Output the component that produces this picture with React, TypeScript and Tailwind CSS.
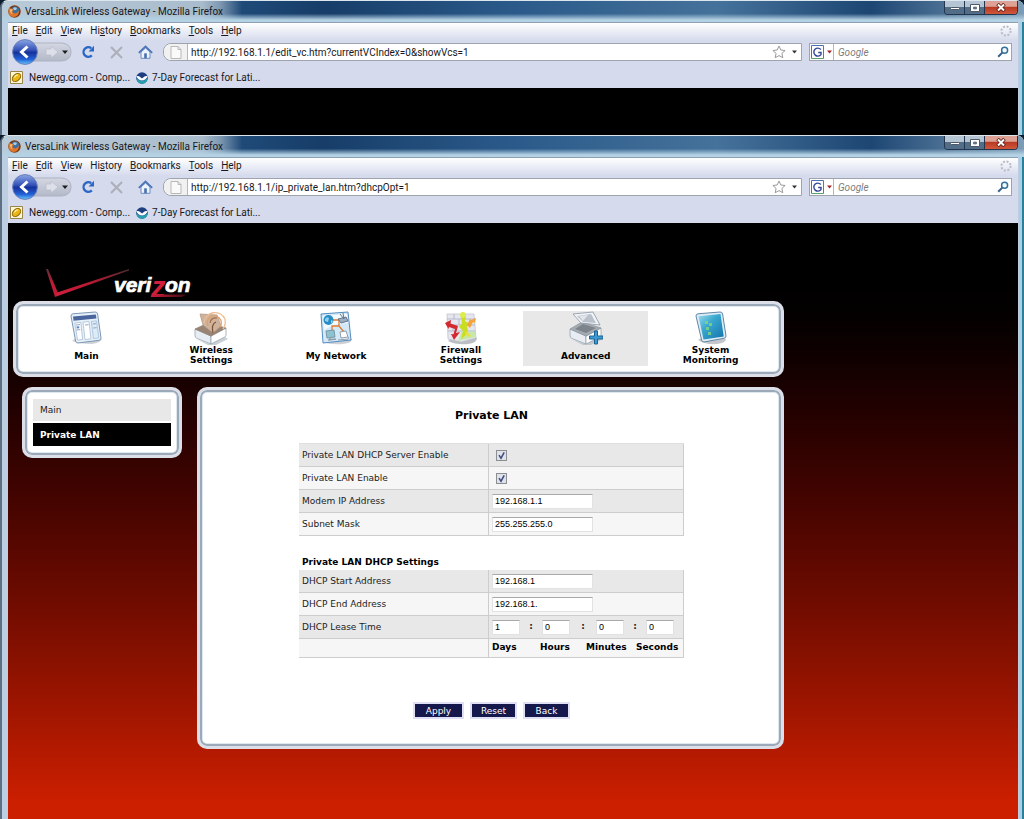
import { useId, type ReactNode } from "react";

/* ---------- browser chrome icons ---------- */

function FirefoxIcon() {
  return (
    <svg width="13" height="13" viewBox="0 0 13 13" aria-hidden="true">
      <circle cx="6.5" cy="6.5" r="6.2" fill="#7a3a14" />
      <circle cx="7.2" cy="5.6" r="4.2" fill="#41719f" />
      <path d="M5 3q2-1.6 4 0l-1 2H6z" fill="#a9cbe2" />
      <path d="M1 2.6q.8 1 2 .8 1.600.2 3.200 1.600L4.400 6q.2 2.600 3.200 2.500 2.600-.4 3-3.200.9 2.200-.6 4.400-2 2.600-5 2.200Q.6 11 .6 6.400q-.1-2 .4-3.800z" fill="#e0762a" />
      <path d="M2 4.400q1.400-.6 2.800.2L3.600 6.200q-.2 2 1.200 3Q1.900 8.300 2 4.400z" fill="#f6c07a" />
    </svg>
  );
}

function BackForward() {
  const id = useId();
  return (
    <svg width="60" height="26" viewBox="0 0 60 26" aria-hidden="true">
      <defs>
        <linearGradient id={id + "a"} x1="0" y1="0" x2="0" y2="1">
          <stop offset="0" stopColor="#8aa6e6" />
          <stop offset=".42" stopColor="#3552b8" />
          <stop offset=".52" stopColor="#16329b" />
          <stop offset=".8" stopColor="#2462d8" />
          <stop offset="1" stopColor="#63c8fa" />
        </linearGradient>
        <linearGradient id={id + "b"} x1="0" y1="0" x2="0" y2="1">
          <stop offset="0" stopColor="#d4d7e2" />
          <stop offset="1" stopColor="#b4b9c8" />
        </linearGradient>
      </defs>
      <path d="M10 4H50Q59 5 59 13Q59 21 50 22H10Z" fill={`url(#${id}b)`} stroke="#aeb3c3" />
      <path d="M34 10h5V7l7 6-7 6v-3h-5z" fill="#dde0e8" stroke="#b7bbc8" strokeWidth=".6" />
      <path d="M50 11.500h6l-3 3.500z" fill="#1b1c22" />
      <circle cx="13" cy="13" r="12.400" fill={`url(#${id}a)`} stroke="#6b7fb8" />
      <path d="M15.500 7.500L9.500 13l6 5.500M9.500 13h1" fill="none" stroke="#fff" strokeWidth="3" strokeLinejoin="miter" />
    </svg>
  );
}

function ReloadIcon() {
  return (
    <svg width="14" height="14" viewBox="0 0 14 14" aria-hidden="true">
      <path d="M10.800 10.400A4.800 4.800 0 1 1 10.200 3.200" fill="none" stroke="#2b67c4" strokeWidth="2.400" />
      <path d="M13 .8v5.600H7.600z" fill="#2b67c4" />
    </svg>
  );
}

function StopIcon() {
  return (
    <svg width="13" height="13" viewBox="0 0 13 13" aria-hidden="true">
      <path d="M1 1l11 11M12 1L1 12" stroke="#adb0bb" strokeWidth="2.200" />
    </svg>
  );
}

function HomeIcon() {
  return (
    <svg width="15" height="14" viewBox="0 0 15 14" aria-hidden="true">
      <path d="M3 7v6.300h9V7L7.500 3z" fill="#eef3fb" stroke="#6d8cc0" />
      <path d="M.8 7.800L7.500 1.500l6.700 6.300" fill="none" stroke="#4c76b8" strokeWidth="1.800" />
      <path d="M6.200 8.300h2.600v5H6.200z" fill="#4770b0" />
    </svg>
  );
}

function PageIcon() {
  return (
    <svg width="12" height="13" viewBox="0 0 12 13" aria-hidden="true">
      <path d="M1 .5h7l3 3v9H1z" fill="#fafafa" stroke="#b8b8b8" />
      <path d="M8 .5v3h3" fill="none" stroke="#b8b8b8" />
    </svg>
  );
}

function StarIcon() {
  return (
    <svg width="14" height="14" viewBox="0 0 14 14" aria-hidden="true">
      <path d="M7 1l1.800 4 4.300.5-3.200 2.900.9 4.300L7 10.600l-3.800 2.100.9-4.300L.9 5.500 5.200 5z" fill="#fff" stroke="#9a9a9a" />
    </svg>
  );
}

function CaretIcon({ color }: { color: string }) {
  return (
    <svg width="5" height="4" viewBox="0 0 5 4" aria-hidden="true">
      <path d="M0 .5h5L2.500 3.500z" fill={color} />
    </svg>
  );
}

function GoogleIcon() {
  return (
    <svg width="13" height="14" viewBox="0 0 13 14" aria-hidden="true">
      <path d="M.5 13.500V.5h12" fill="none" stroke="#4a6fb5" />
      <path d="M.5 13.500h12" stroke="#5ca06a" />
      <path d="M12.500.5v13" stroke="#b8555a" />
      <path d="M9.800 4.400A4 4 0 1 0 10 9.600V7.500H7.200" fill="none" stroke="#33459a" strokeWidth="1.400" />
    </svg>
  );
}

function SearchIcon() {
  return (
    <svg width="12" height="12" viewBox="0 0 12 12" aria-hidden="true">
      <circle cx="7.600" cy="4.200" r="3" fill="#f4fafd" stroke="#33719c" strokeWidth="1.500" />
      <path d="M5.300 6.600L1.200 10.700" stroke="#33618c" strokeWidth="2" />
    </svg>
  );
}

function ThrobberIcon() {
  return (
    <svg width="12" height="12" viewBox="0 0 12 12" aria-hidden="true">
      <circle cx="6" cy="6" r="4.600" fill="none" stroke="#b9bcc6" strokeWidth="2" strokeDasharray="2 1.610" />
    </svg>
  );
}

function EggIcon() {
  return (
    <svg width="13" height="13" viewBox="0 0 13 13" aria-hidden="true">
      <path d="M.5.5h12v12H.5z" fill="#fdf6d8" stroke="#9a8448" />
      <ellipse cx="6.500" cy="6.500" rx="4.800" ry="3.300" transform="rotate(-42 6.500 6.500)" fill="#eab614" stroke="#8a6306" />
      <path d="M4.400 6.400Q5.300 4 7.800 3.800" fill="none" stroke="#fff0a0" strokeWidth="1.300" />
    </svg>
  );
}

function NoaaIcon() {
  return (
    <svg width="12" height="12" viewBox="0 0 12 12" aria-hidden="true">
      <circle cx="6" cy="6" r="5.800" fill="#1d3f80" />
      <path d="M.2 5.500L1.200 9.200A5.800 5.800 0 0 0 10.800 9.200L11.800 5.500Q9 9 6 9T.2 5.500z" fill="#25a0ae" />
      <path d="M.5 4Q3 3.800 4.800 5.400L6 6.400l1.200-1Q9 3.800 11.500 4 11.500 5.500 9.500 7.200 7.600 8.600 6 8.600 4.400 8.600 2.500 7.200.5 5.500.5 4z" fill="#fff" />
    </svg>
  );
}

/* ---------- router page icons ---------- */

function MainIcon() {
  return (
    <svg width="34" height="34" viewBox="0 0 34 34" aria-hidden="true">
      <path d="M3 30l6-5 24 3q-2 4-10 5-12 0-20-3z" fill="#b9bec4" opacity=".7" />
      <path d="M2 5Q2 3 4 2.800L26 1q2.300-.1 2.600 2L32 27q.2 2-2 2.300L9 32q-2 .2-2.400-2z" fill="#e6f0f9" stroke="#7d97b5" />
      <path d="M4 5.500L26.800 3.600l.6 4L4.600 9.700z" fill="#4a669c" />
      <path d="M5.800 12l6-.6 1.800 17-5 .8zM14 11.200l6-.6 2 17.200-6 .7z" fill="#fff" stroke="#a8bdd6" strokeWidth=".8" />
      <path d="M22.300 10.400l5.200-.5 2.300 17-5.300.7z" fill="#dcecf8" stroke="#a8bdd6" strokeWidth=".8" />
      <path d="M7 14l4-.4M7.300 19l4-.4M16 14l3.500-.3M23.700 13l3.500-.3M24.200 17l3.500-.3" stroke="#8fa5c5" />
      <path d="M7.500 15.500l2.600-.2.300 2-2.600.2z" fill="#5f86bd" />
    </svg>
  );
}

function BoxBase() {
  return (
    <>
      <path d="M4 29l12 4 15-7 3 2-12 6-7 .5z" fill="#a9b1b9" opacity=".6" />
      <path d="M1 18L17 25v8L3 27.500Q1 26.500 1 24.500z" fill="#e8edf3" stroke="#8a98a8" strokeWidth=".7" />
      <path d="M17 25l15-8v7q0 1.200-1 1.900L17 33z" fill="#fff" stroke="#8a98a8" strokeWidth=".7" />
    </>
  );
}

function WirelessIcon() {
  return (
    <svg width="34" height="34" viewBox="0 0 34 34" aria-hidden="true">
      <BoxBase />
      <path d="M1 18L14 12l18 5-15 8z" fill="#9a8373" stroke="#8c7f75" strokeWidth=".7" />
      <path d="M6 3l17 1 4 11-8 7L9 14z" fill="#cfb39d" stroke="#b09a89" strokeWidth=".8" />
      <path d="M19 22Q17 13 22 11" stroke="#7d5436" fill="none" strokeWidth="1.200" />
      <path d="M14 15a7 7 0 1 1 12 1" fill="none" stroke="#de9f6a" strokeWidth="1.300" />
      <path d="M10 12A11 11 0 0 1 31 8q1 6-2 10" fill="none" stroke="#efbf94" strokeWidth="1.300" />
      <path d="M16 12q1-6 7-5" fill="none" stroke="#a56d45" strokeWidth="1.200" />
    </svg>
  );
}

function NetworkIcon() {
  return (
    <svg width="34" height="34" viewBox="0 0 34 34" aria-hidden="true">
      <path d="M4 31l6-4 23 1q0 4-9 5-12 1-20-2z" fill="#b9bec4" opacity=".7" />
      <path d="M2 3L29 1l3 28L4 32z" fill="#d4e9f8" stroke="#568bbf" />
      <path d="M4 5l24-2 1 9q-13 0-24 7z" fill="#f2faff" />
      <path d="M14 9h6v6h-7v6m7-6l5 6" fill="none" stroke="#e07c32" strokeWidth="1.300" />
      <circle cx="9.500" cy="9" r="5" fill="#278cc6" />
      <path d="M6 8q2-3 4-1l-1 4-3-1zm6 1l2 1-2 3z" fill="#8ed1ee" />
      <path d="M19 8l8-2 2 4-7 2zM21 3l4 5m-1-6l1 6" fill="#9badc0" stroke="#66768a" />
      <path d="M7 20l8-1 1 7-8 1z" fill="#8ec2cf" stroke="#7797a8" />
      <path d="M9 29l8-1M11 27v2" stroke="#8d9caa" strokeWidth="1.500" />
      <path d="M21 21l6-1 2 6-7 1zM19 29l10-1 1-2" fill="#fff" stroke="#909eac" />
    </svg>
  );
}

function FirewallIcon() {
  return (
    <svg width="34" height="34" viewBox="0 0 34 34" aria-hidden="true">
      <path d="M4 30l6-5 23 2q0 5-9 6-12 1-20-3z" fill="#a9aeb4" opacity=".8" />
      <path d="M3 3l27 0 2 24-15 4L4 28z" fill="#e5e6ee" stroke="#bbbdca" strokeWidth=".7" />
      <path d="M3 8h28M3 14h28M4 20h27M10 3v5M20 3v5M15 8v6M26 8v6M9 14v6" stroke="#b7bacc" />
      <path d="M14 30l4-10 13 1 1 5z" fill="#c6e8a9" />
      <path d="M1 12l6-3-.5 3.500L14 15l-2 7 4-1-6 8-3-6 2.500.3L11 18l-6-2-.5 2z" fill="#d3292f" />
      <path d="M19 1l3 4-1 5 5 3-3 2 1 5-3 5-4 3 2-8-4-4 3-4-1-6z" fill="#c9de22" />
      <circle cx="19" cy="4" r="3" fill="#dced4d" />
      <path d="M23 14l3-6 1 1 5-2-1 5-2-1-3 6z" fill="#f2a53a" />
      <path d="M22 20l5 5-2 1-4-3z" fill="#efdc3e" />
    </svg>
  );
}

function AdvancedIcon() {
  return (
    <svg width="34" height="34" viewBox="0 0 34 34" aria-hidden="true">
      <BoxBase />
      <path d="M1 18L13 11l19 6-15 8z" fill="#a4abb1" stroke="#8b939b" strokeWidth=".7" />
      <path d="M6 18l8-5 13 4-10 5z" fill="#7d848b" />
      <path d="M4 3L24 1l7 13-19-2z" fill="#f1f4f7" stroke="#8894a4" strokeWidth=".8" />
      <path d="M8 5l14-2 5 9-13-1z" fill="#b9c0ca" />
      <path d="M10 5l9-1-5 6z" fill="#e1e5ea" />
      <path d="M25.500 20h3v5H34v3h-5.500v5h-3v-5h-5v-3h5z" fill="#3c9bd2" stroke="#1c6395" />
    </svg>
  );
}

function MonitorIcon() {
  const id = useId();
  return (
    <svg width="34" height="34" viewBox="0 0 34 34" aria-hidden="true">
      <defs>
        <linearGradient id={id} x1="0" y1="0" x2="1" y2="1">
          <stop offset="0" stopColor="#9bdcee" />
          <stop offset=".4" stopColor="#3aa8cf" />
          <stop offset="1" stopColor="#1272ac" />
        </linearGradient>
      </defs>
      <path d="M4 29l6-4 22 3q0 4-9 5-12 1-19-4z" fill="#a9aeb4" opacity=".7" />
      <path d="M2 5Q2 3 4 2.800L26 1q2.300-.1 2.600 2L32 25q.2 2-2 2.300L10 31q-2 .2-2.400-2z" fill="#dcebf4" stroke="#5f87a8" />
      <path d="M4.500 5.200L26.500 3l3.200 22.500L9.500 28.500z" fill={`url(#${id})`} />
      <path d="M11 10h3v3h-3zM15 12h3v3h-3zM12 16h3v3h-3zM14 21h3v3h-3z" fill="#83d67c" opacity=".8" />
    </svg>
  );
}

function VerizonLogo() {
  const id = useId();
  return (
    <svg width="146" height="34" viewBox="0 0 146 34" role="img" aria-label="verizon">
      <defs>
        <linearGradient id={id + "l"} x1="0" y1="0" x2="0" y2="1">
          <stop offset="0" stopColor="#5b3036" />
          <stop offset=".5" stopColor="#c01c38" />
        </linearGradient>
        <linearGradient id={id + "r"} x1="0" y1="0" x2="1" y2="0">
          <stop offset="0" stopColor="#d01f3c" />
          <stop offset=".55" stopColor="#b01a32" />
          <stop offset="1" stopColor="#4a2c30" />
        </linearGradient>
        <linearGradient id={id + "z"} x1="0" y1="0" x2="1" y2="0">
          <stop offset="0" stopColor="#d01f3c" />
          <stop offset="1" stopColor="#3a0a12" />
        </linearGradient>
      </defs>
      <path d="M0 0L2 0L12 24L9 28z" fill={`url(#${id}l)`} />
      <path d="M9 28L11 23.500L83 0V1.500z" fill={`url(#${id}r)`} />
      <g fontFamily='"Liberation Sans", sans-serif' fontWeight="700" fontStyle="italic" strokeWidth=".7">
        <text x="68" y="23" fontSize="21" fill="#fff" stroke="#fff">veri</text>
        <text x="105" y="28" fontSize="29" fill="#d01f3c">z</text>
        <text x="119" y="23" fontSize="21" fill="#fff" stroke="#fff">on</text>
      </g>
      <path d="M106 25.500h34l-4 2.500h-31z" fill={`url(#${id}z)`} />
    </svg>
  );
}

/* ---------- browser window ---------- */

const menus = ["File", "Edit", "View", "History", "Bookmarks", "Tools", "Help"];
const accessIndex = [0, 0, 0, 2, 0, 0, 0];

function WindowButtons() {
  return (
    <div className="mr-1.5 flex h-3.5 overflow-hidden rounded-b border border-t-0 border-[#23364d]">
      <button aria-label="Minimize" className="flex w-5 items-end justify-center border-r border-[#23364d] bg-linear-to-b from-[#b5c5d3] from-45% to-[#526d88] to-50% pb-1">
        <span className="h-[3px] w-2.5 rounded-sm border border-[#4d5966] bg-white" />
      </button>
      <button aria-label="Maximize" className="flex w-5 items-center justify-center border-r border-[#23364d] bg-linear-to-b from-[#b5c5d3] from-45% to-[#526d88] to-50%">
        <svg width="10" height="8" viewBox="0 0 10 8" aria-hidden="true">
          <path d="M.5.500h9v7h-9z" fill="#fff" stroke="#4d5966" />
          <path d="M3.500 3h3v2h-3z" fill="#6c8298" stroke="#4d5966" strokeWidth=".6" />
        </svg>
      </button>
      <button aria-label="Close" className="flex w-8 items-center justify-center bg-linear-to-b from-[#dda195] from-40% via-[#b93a23] via-50% to-[#d0573c]">
        <svg width="10" height="9" viewBox="0 0 10 9" aria-hidden="true">
          <path d="M1.500 1l7 7M8.500 1l-7 7" stroke="#5d2018" strokeWidth="3.600" />
          <path d="M2 1.500l6 6M8 1.500l-6 6" stroke="#fff" strokeWidth="2" />
        </svg>
      </button>
    </div>
  );
}

function BrowserWindow({ url, grow, children }: { url: string; grow?: boolean; children: ReactNode }) {
  return (
    <section
      className={
        "flex flex-col rounded-t-lg border-t border-l-2 border-t-[#dbe6ee] border-l-[#5e6f82] bg-[#bccfe2] pr-1.5 pl-1.5 font-['Roboto','Noto_Sans',sans-serif] text-[10px] text-[#16181d] shadow-[inset_-2px_0_0_#2d7f99,inset_-5px_0_0_#a9d0e5] " +
        (grow ? "grow" : "")
      }
    >
      <header className="-mx-1.5 flex h-[21px] items-start justify-between rounded-t-md bg-[linear-gradient(to_bottom,transparent_60%,#b4d2e4_90%),linear-gradient(to_right,#b9cad8_0,#a9bccd_200px,#7f99b2_218px,#1f4a78_240px,#173d68_320px,#2b5a8a_50%,#45729a_70%,#1d4673_85%,#7d9cb6_100%)] pl-1.5">
        <h1 className="flex h-5 items-center gap-1">
          <FirefoxIcon />
          VersaLink Wireless Gateway - Mozilla Firefox
        </h1>
        <WindowButtons />
      </header>
      <div className="border-t border-[#8c9fb3] bg-linear-to-b from-white to-[#d5daec] to-[18px]">
        <div className="flex h-4 items-center justify-between pr-1.5 pl-1">
          <nav className="flex gap-2 pb-px">
            {menus.map((m, i) => (
              <button key={m} className="leading-[15px]">
                {m.slice(0, accessIndex[i])}
                <span className="underline">{m[accessIndex[i]]}</span>
                {m.slice(accessIndex[i] + 1)}
              </button>
            ))}
          </nav>
          <ThrobberIcon />
        </div>
        <div className="flex h-[26px] items-center pr-1.5 pl-1">
          <button aria-label="Back and forward"><BackForward /></button>
          <button aria-label="Reload" className="ml-[9px]"><ReloadIcon /></button>
          <button aria-label="Stop" className="ml-[15px]"><StopIcon /></button>
          <button aria-label="Home" className="ml-[15px]"><HomeIcon /></button>
          <div className="ml-2.5 flex h-[18px] grow items-center rounded-l-lg border border-[#9fa3ad] bg-white">
            <span className="flex h-4 w-6 items-center justify-center rounded-l-lg border-r border-[#b4b7bf] bg-[#f1f1f1]"><PageIcon /></span>
            <input aria-label="Location" defaultValue={url} className="h-4 min-w-0 grow bg-transparent pl-[3px] outline-none" />
            <button aria-label="Bookmark this page"><StarIcon /></button>
            <button aria-label="Show history" className="mr-1 ml-1.5"><CaretIcon color="#333" /></button>
          </div>
          <div className="ml-[7px] flex h-[18px] w-[203px] items-center border border-[#9fa3ad] bg-white">
            <button aria-label="Search engine" className="flex h-4 w-6 items-center justify-center gap-[3px] border-r border-[#b4b7bf]">
              <GoogleIcon />
              <CaretIcon color="#a3262b" />
            </button>
            <input aria-label="Search" placeholder="Google" className="h-4 min-w-0 grow bg-transparent pl-1 italic outline-none placeholder:text-[#7c7c7c]" />
            <button aria-label="Go" className="mr-0.5"><SearchIcon /></button>
          </div>
        </div>
        <div className="flex h-[23px] items-center gap-1.5 pt-0.5 pl-0.5">
          <a href="#newegg" className="flex items-center gap-1.5"><EggIcon />Newegg.com - Comp...</a>
          <a href="#forecast" className="flex items-center gap-1"><NoaaIcon />7-Day Forecast for Lati...</a>
        </div>
      </div>
      {children}
    </section>
  );
}

/* ---------- router admin page ---------- */

const navItems: { label: ReactNode; key: string; icon: ReactNode; tall?: boolean; active?: boolean }[] = [
  { key: "main", label: "Main", icon: <MainIcon /> },
  { key: "wireless", label: <>Wireless<br />Settings</>, icon: <WirelessIcon />, tall: true },
  { key: "network", label: "My Network", icon: <NetworkIcon /> },
  { key: "firewall", label: <>Firewall<br />Settings</>, icon: <FirewallIcon />, tall: true },
  { key: "advanced", label: "Advanced", icon: <AdvancedIcon />, active: true },
  { key: "system", label: <>System<br />Monitoring</>, icon: <MonitorIcon />, tall: true },
];

function Panel({ className, children }: { className: string; children: ReactNode }) {
  return (
    <div className={"rounded-[10px] border-[3px] border-[#dcdfe8] bg-white shadow-[inset_0_0_0_2px_#9ca9b9,inset_0_0_0_3px_#dfe8ef] " + className}>
      {children}
    </div>
  );
}

const labelCell = "border-r border-b border-[#cdcdcd] pt-0.5 pl-[3px] text-left font-normal";
const valueCell = "border-r border-b border-[#cdcdcd] pl-[3px]";
const field = "h-[15px] border border-[#e2e2e2] border-t-[#a9a9a9] bg-white pl-0.5 font-['Liberation_Sans',sans-serif] text-[9px] text-black outline-none";
const actionButton = "h-[17px] border-2 border-[#dfe0f5] bg-[#15184a] leading-3 text-white";

function Row({ id, label, dark, children }: { id: string; label: string; dark?: boolean; children: ReactNode }) {
  return (
    <tr className={"h-[23px] " + (dark ? "bg-[#e8e8e8]" : "bg-[#f6f6f6]")}>
      <th scope="row" className={labelCell}><label htmlFor={id}>{label}</label></th>
      <td className={valueCell}>{children}</td>
    </tr>
  );
}

function Check({ id }: { id: string }) {
  return (
    <span className="ml-1 grid size-[11px]">
      <input id={id} type="checkbox" defaultChecked className="peer col-start-1 row-start-1 size-[11px] appearance-none border border-[#8b8f94] bg-[#dfe3e8]" />
      <svg viewBox="0 0 11 11" className="pointer-events-none invisible col-start-1 row-start-1 size-[11px] peer-checked:visible" aria-hidden="true">
        <path d="M3 5.200l2 3L8.200 2.400" fill="none" stroke="#3c4b86" strokeWidth="1.500" />
      </svg>
    </span>
  );
}

function Columns() {
  return (
    <colgroup>
      <col className="w-[190px]" />
      <col />
    </colgroup>
  );
}

const lease = [
  { unit: "Days", value: "1" },
  { unit: "Hours", value: "0" },
  { unit: "Minutes", value: "0" },
  { unit: "Seconds", value: "0" },
];

function RouterPage() {
  return (
    <main className="grow bg-linear-to-b from-black from-[20px] to-[#cc1f00] to-[580px] pt-[46px] pb-[69px] pl-[5px] font-['DejaVu_Sans',sans-serif] text-[9px] text-[#222]">
      <div className="w-[771px] max-w-full">
        <div className="mb-[-2px] ml-[33px]"><VerizonLogo /></div>
        <Panel className="px-2 pt-[7px] pb-2">
          <nav className="grid grid-cols-6">
            {navItems.map((n) => (
              <a
                key={n.key}
                href={"#" + n.key}
                className={"flex h-[55px] flex-col items-center text-center leading-[10px] font-bold text-black " + (n.active ? "bg-[#e8e8e8]" : "")}
              >
                {n.icon}
                <span className={n.tall ? "" : "mt-1.5"}>{n.label}</span>
              </a>
            ))}
          </nav>
        </Panel>
        <div className="mt-2.5 flex items-start gap-[15px] pl-[9px]">
          <Panel className="w-40 shrink-0 px-2 py-[9px]">
            <nav className="flex flex-col gap-0.5">
              <a href="#main" className="flex h-[22px] items-center bg-[#e8e8e8] pt-0.5 pl-[7px]">Main</a>
              <a href="#private-lan" className="flex h-[23px] items-center bg-black pt-0.5 pl-[7px] font-bold text-white">Private LAN</a>
            </nav>
          </Panel>
          <Panel className="flex grow flex-col items-center pt-[18px] pb-[27px] pl-0.5">
            <h2 className="text-[11px] leading-4 font-bold text-black">Private LAN</h2>
            <form className="mt-[19px] w-[385px]" onSubmit={(e) => e.preventDefault()}>
              <table className="w-full table-fixed border-separate border-spacing-0 border-t border-[#e0e0e0]">
                <Columns />
                <tbody>
                  <Row id="server" label="Private LAN DHCP Server Enable" dark><Check id="server" /></Row>
                  <Row id="lan" label="Private LAN Enable"><Check id="lan" /></Row>
                  <Row id="ip" label="Modem IP Address" dark>
                    <input id="ip" defaultValue="192.168.1.1" className={field + " block w-[101px]"} />
                  </Row>
                  <Row id="mask" label="Subnet Mask">
                    <input id="mask" defaultValue="255.255.255.0" className={field + " block w-[101px]"} />
                  </Row>
                </tbody>
              </table>
              <h3 className="mt-[18px] pl-[3px] leading-4 font-bold text-black">Private LAN DHCP Settings</h3>
              <table className="w-full table-fixed border-separate border-spacing-0">
                <Columns />
                <tbody>
                  <Row id="start" label="DHCP Start Address" dark>
                    <input id="start" defaultValue="192.168.1" className={field + " block w-[101px]"} />
                  </Row>
                  <Row id="end" label="DHCP End Address">
                    <input id="end" defaultValue="192.168.1." className={field + " block w-[101px]"} />
                  </Row>
                  <Row id="lease-Days" label="DHCP Lease Time" dark>
                    <div className="grid grid-cols-[50px_54px_50px_28px]">
                      {lease.map((l, i) => (
                        <span key={l.unit} className="flex items-center">
                          <input id={"lease-" + l.unit} aria-label={l.unit} defaultValue={l.value} className={field + " w-7"} />
                          {i < 3 && <b className="grow text-center">:</b>}
                        </span>
                      ))}
                    </div>
                  </Row>
                  <tr className="h-[19px] bg-[#f6f6f6]">
                    <td className={labelCell} />
                    <td className={valueCell}>
                      <div className="grid grid-cols-[48px_46px_50px_auto] font-bold text-black">
                        {lease.map((l) => <span key={l.unit}>{l.unit}</span>)}
                      </div>
                    </td>
                  </tr>
                </tbody>
              </table>
              <div className="mt-11 flex justify-center gap-1.5">
                <button className={actionButton + " w-[51px]"}>Apply</button>
                <button type="reset" className={actionButton + " w-[47px]"}>Reset</button>
                <button type="button" className={actionButton + " w-[47px]"}>Back</button>
              </div>
            </form>
          </Panel>
        </div>
      </div>
    </main>
  );
}

export default function App() {
  return (
    <div className="flex min-h-screen flex-col bg-[#0d1c2c]">
      <BrowserWindow url="http://192.168.1.1/edit_vc.htm?currentVCIndex=0&showVcs=1">
        <div className="h-[47px] bg-black" />
      </BrowserWindow>
      <BrowserWindow url="http://192.168.1.1/ip_private_lan.htm?dhcpOpt=1" grow>
        <RouterPage />
      </BrowserWindow>
    </div>
  );
}
